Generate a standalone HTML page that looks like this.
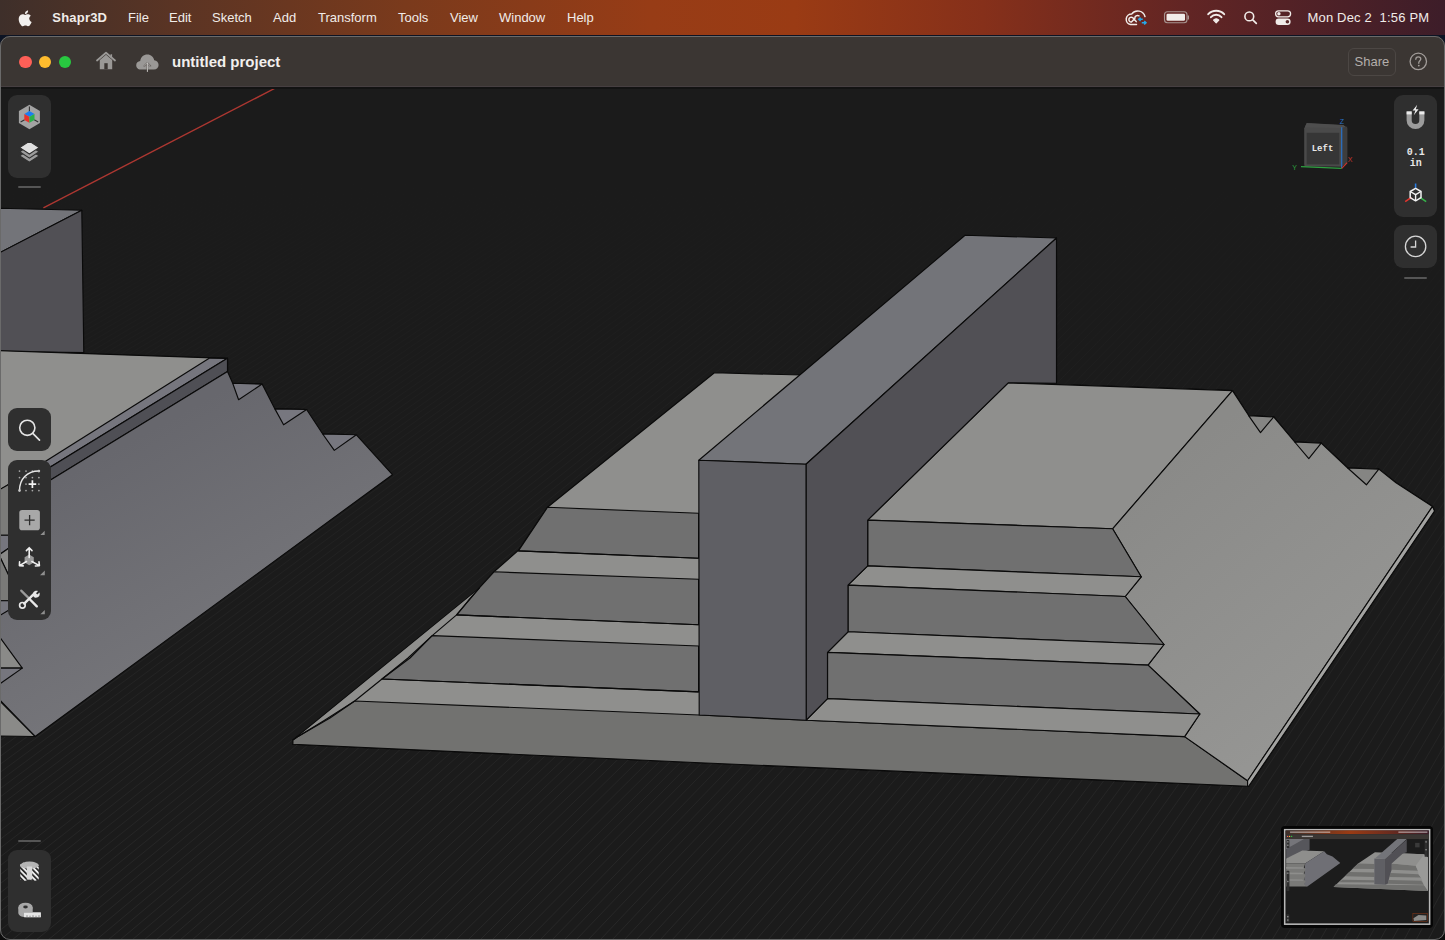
<!DOCTYPE html>
<html><head><meta charset="utf-8">
<style>
html,body{margin:0;padding:0;}
body{width:1445px;height:940px;overflow:hidden;position:relative;background:linear-gradient(180deg,#0d1424 0,#0d1424 60px,#0c0c0c 61px,#0c0c0c 100%);font-family:"Liberation Sans",sans-serif;}
.abs{position:absolute;}
#menubar{left:0;top:0;width:1445px;height:35px;background:linear-gradient(90deg,#3e2f2a 0%,#5a3424 12%,#7a3a1c 28%,#973c16 45%,#9a3b14 55%,#86301a 68%,#622524 82%,#3d1d29 100%);}
.mi{position:absolute;top:10.5px;font-size:13px;line-height:13px;color:#f1ece9;white-space:nowrap;}
#win{left:0;top:36px;width:1445px;height:904px;border-radius:10px;overflow:hidden;background:#1b1b1b;}
#titlebar{left:0;top:0;width:1445px;height:50px;background:#3b3633;border-bottom:1px solid #463f41;}
#winborder{left:0;top:36px;width:1443px;height:902px;border-radius:10px;border:1px solid #6a6a6a;pointer-events:none;}
.panel{position:absolute;background:#2f2f2f;border-radius:9px;}
.divider{position:absolute;height:2px;background:#555;border-radius:1px;}
</style></head><body>
<div id="menubar" class="abs">
  <svg class="abs" style="left:18px;top:9px" width="16" height="18" viewBox="0 0 16 18"><path d="M11.2 9.6c0-1.9 1.6-2.8 1.6-2.9-0.9-1.3-2.3-1.5-2.8-1.5-1.2-0.1-2.3 0.7-2.9 0.7-0.6 0-1.5-0.7-2.5-0.7C3.300 5.2 2.1 6 1.400 7.200 0 9.600 1 13.200 2.400 15.200c0.7 1 1.5 2.100 2.500 2.100 1 0 1.400-0.700 2.600-0.700 1.200 0 1.500 0.700 2.600 0.600 1.100 0 1.800-1 2.400-2 0.800-1.100 1.100-2.200 1.100-2.200-0.100 0-2.300-0.900-2.400-3.400zM9.300 3.900c0.500-0.700 0.900-1.600 0.800-2.500-0.800 0-1.700 0.500-2.300 1.200-0.500 0.600-0.900 1.500-0.800 2.400 0.900 0.100 1.700-0.400 2.300-1.100z" fill="#f2f0ee"/></svg>
  <div class="mi" style="left:52.3px;font-weight:bold;letter-spacing:0.2px">Shapr3D</div>
  <div class="mi" style="left:128px">File</div>
  <div class="mi" style="left:169px">Edit</div>
  <div class="mi" style="left:212px">Sketch</div>
  <div class="mi" style="left:273px">Add</div>
  <div class="mi" style="left:318px">Transform</div>
  <div class="mi" style="left:398px">Tools</div>
  <div class="mi" style="left:450px">View</div>
  <div class="mi" style="left:499px">Window</div>
  <div class="mi" style="left:567px">Help</div>
  
  <svg class="abs" style="left:1122px;top:6px" width="170" height="24" viewBox="1122 6 170 24">
    <g fill="none" stroke="#f1ece9" stroke-width="1.5" stroke-linecap="round">
      <path d="M1136.5 24.6 H1130.6 A5.4 5.4 0 0 1 1131.8 13.9 A7.5 7.5 0 0 1 1145 16.6"/>
      <path d="M1136.2 21.6 L1132.6 17.6 A2.4 2.4 0 1 0 1131.4 22 L1134.8 18.4 A2.8 2.8 0 0 1 1139 15.8"/>
    </g>
    <path d="M1142.8 19.3 H1138.8 M1140.6 17.6 L1138.8 19.3 L1140.6 21" fill="none" stroke="#25a8e8" stroke-width="1.5"/>
    <path d="M1141.8 22.8 H1146 M1144.2 21.1 L1146 22.8 L1144.2 24.5" fill="none" stroke="#25a8e8" stroke-width="1.5"/>
    <rect x="1164.5" y="11.8" width="22.5" height="11" rx="3" fill="none" stroke="#a89490" stroke-width="1.1"/>
    <rect x="1166.5" y="13.8" width="18.5" height="7" rx="1.3" fill="#f1ece9"/>
    <path d="M1188.3 15.5 V19.5" stroke="#a89490" stroke-width="1.4"/>
    <path d="M1208.2 14.2 A11 11 0 0 1 1224.2 14.2" fill="none" stroke="#f1ece9" stroke-width="1.9" stroke-linecap="round"/>
    <path d="M1210.9 17.2 A7 7 0 0 1 1221.5 17.2" fill="none" stroke="#f1ece9" stroke-width="1.9" stroke-linecap="round"/>
    <path d="M1213.6 20.1 A3.2 3.2 0 0 1 1218.8 20.1 L1216.2 22.8 Z" fill="#f1ece9" stroke="#f1ece9" stroke-width="1.2" stroke-linejoin="round"/>
    <circle cx="1249.3" cy="16.4" r="4.4" fill="none" stroke="#f1ece9" stroke-width="1.6"/>
    <path d="M1252.5 19.6 L1256.3 23.4" stroke="#f1ece9" stroke-width="1.7" stroke-linecap="round"/>
    <rect x="1275.6" y="10.8" width="15" height="6" rx="3" fill="none" stroke="#f1ece9" stroke-width="1.3"/>
    <circle cx="1278.9" cy="13.8" r="1.7" fill="#f1ece9"/>
    <rect x="1275.6" y="18.6" width="15" height="6.4" rx="3.2" fill="#f1ece9"/>
    <circle cx="1287.4" cy="21.8" r="1.8" fill="#5a2a2a"/>
  </svg>
  <div class="mi" style="left:1307.5px;letter-spacing:0.18px">Mon Dec 2&nbsp;&nbsp;1:56 PM</div>
</div>
<div id="win" class="abs">
  <div id="titlebar" class="abs">
  <div class="abs" style="left:19.4px;top:19.7px;width:12.4px;height:12.4px;border-radius:50%;background:#fe5f57"></div>
  <div class="abs" style="left:38.9px;top:19.7px;width:12.4px;height:12.4px;border-radius:50%;background:#febc2e"></div>
  <div class="abs" style="left:58.7px;top:19.7px;width:12.4px;height:12.4px;border-radius:50%;background:#28c840"></div>
  <svg class="abs" style="left:95px;top:15px" width="22" height="20" viewBox="0 0 22 20">
    <path d="M2 9.5 L11 1.8 L20 9.5" fill="none" stroke="#9a9896" stroke-width="1.8" stroke-linecap="round" stroke-linejoin="round"/>
    <path d="M16.3 3.2 V6.8" stroke="#9a9896" stroke-width="1.6"/>
    <path d="M4.8 9 L11 3.8 L17.2 9 V18.2 H4.8 Z" fill="#9a9896"/>
    <rect x="9.3" y="12.2" width="3.4" height="6" fill="#3b3633"/>
  </svg>
  <svg class="abs" style="left:135px;top:16px" width="25" height="20" viewBox="0 0 25 20">
    <path d="M6 17.5 C2.5 17.5 1.2 15 1.2 13.2 C1.2 10.8 3 9.2 5.2 9 C5.6 5.2 8.6 2.5 12.4 2.5 C16 2.5 18.6 5 19.2 8.2 C21.8 8.4 23.6 10.4 23.6 13 C23.6 15.6 21.6 17.5 19 17.5 Z" fill="#9a9896"/>
    <path d="M12.4 19.5 V11.2 M9.4 14 L12.4 11 L15.4 14" fill="none" stroke="#3b3633" stroke-width="1.5" stroke-linecap="round" stroke-linejoin="round"/>
    <path d="M12.4 19.5 V11.2 M9.4 14 L12.4 11 L15.4 14" fill="none" stroke="#d8d6d4" stroke-width="0.9" stroke-linecap="round" stroke-linejoin="round"/>
  </svg>
  <div class="abs" style="left:172px;top:17.5px;font-size:15px;line-height:15px;font-weight:bold;color:#f2efed;white-space:nowrap">untitled project</div>
  <div class="abs" style="left:1348px;top:12.3px;width:46px;height:26px;border:1px solid #4c4744;border-radius:6px;box-sizing:content-box"></div>
  <div class="abs" style="left:1354.5px;top:18.5px;font-size:13px;line-height:13px;color:#b3aeab;white-space:nowrap">Share</div>
  <svg class="abs" style="left:1408px;top:15px" width="21" height="21" viewBox="0 0 21 21">
    <circle cx="10.3" cy="10.4" r="8.2" fill="none" stroke="#a19c99" stroke-width="1.3"/>
    <path d="M7.8 8.3 C7.8 6.8 8.9 5.9 10.3 5.9 C11.8 5.9 12.8 6.8 12.8 8.1 C12.8 9.6 10.8 9.9 10.8 11.6 V12.3" fill="none" stroke="#a19c99" stroke-width="1.3" stroke-linecap="round"/>
    <circle cx="10.8" cy="14.6" r="0.9" fill="#a19c99"/>
  </svg>
</div>
  <svg class="abs" style="left:0;top:51px" width="1445" height="853" viewBox="0 87 1445 853">
    <defs><linearGradient id="gridfade" gradientUnits="userSpaceOnUse" x1="0" y1="180" x2="0" y2="940"><stop offset="0" stop-color="#1b1b1b"/><stop offset="0.45" stop-color="#212121"/><stop offset="1" stop-color="#272727"/></linearGradient>
    <linearGradient id="sideR" gradientUnits="userSpaceOnUse" x1="1150" y1="480" x2="1330" y2="700"><stop offset="0" stop-color="#8a8a88"/><stop offset="1" stop-color="#959593"/></linearGradient>
    <linearGradient id="sideL" gradientUnits="userSpaceOnUse" x1="150" y1="430" x2="300" y2="700"><stop offset="0" stop-color="#67676d"/><stop offset="1" stop-color="#7a7a7e"/></linearGradient></defs>
    <rect x="0" y="87" width="1445" height="853" fill="#1b1b1b"/>
    <g stroke="url(#gridfade)" stroke-width="1"><line x1="-1155.8" y1="140" x2="-3600.0" y2="940"/><line x1="-1148.6" y1="140" x2="-3588.0" y2="940"/><line x1="-1141.4" y1="140" x2="-3576.0" y2="940"/><line x1="-1134.3" y1="140" x2="-3564.0" y2="940"/><line x1="-1127.1" y1="140" x2="-3552.0" y2="940"/><line x1="-1119.9" y1="140" x2="-3540.0" y2="940"/><line x1="-1112.7" y1="140" x2="-3528.0" y2="940"/><line x1="-1105.5" y1="140" x2="-3516.0" y2="940"/><line x1="-1098.4" y1="140" x2="-3504.0" y2="940"/><line x1="-1091.2" y1="140" x2="-3492.0" y2="940"/><line x1="-1084.0" y1="140" x2="-3480.0" y2="940"/><line x1="-1076.8" y1="140" x2="-3468.0" y2="940"/><line x1="-1069.7" y1="140" x2="-3456.0" y2="940"/><line x1="-1062.5" y1="140" x2="-3444.0" y2="940"/><line x1="-1055.3" y1="140" x2="-3432.0" y2="940"/><line x1="-1048.1" y1="140" x2="-3420.0" y2="940"/><line x1="-1041.0" y1="140" x2="-3408.0" y2="940"/><line x1="-1033.8" y1="140" x2="-3396.0" y2="940"/><line x1="-1026.6" y1="140" x2="-3384.0" y2="940"/><line x1="-1019.4" y1="140" x2="-3372.0" y2="940"/><line x1="-1012.3" y1="140" x2="-3360.0" y2="940"/><line x1="-1005.1" y1="140" x2="-3348.0" y2="940"/><line x1="-997.9" y1="140" x2="-3336.0" y2="940"/><line x1="-990.7" y1="140" x2="-3324.0" y2="940"/><line x1="-983.6" y1="140" x2="-3312.0" y2="940"/><line x1="-976.4" y1="140" x2="-3300.0" y2="940"/><line x1="-969.2" y1="140" x2="-3288.0" y2="940"/><line x1="-962.0" y1="140" x2="-3276.0" y2="940"/><line x1="-954.9" y1="140" x2="-3264.0" y2="940"/><line x1="-947.7" y1="140" x2="-3252.0" y2="940"/><line x1="-940.5" y1="140" x2="-3240.0" y2="940"/><line x1="-933.3" y1="140" x2="-3228.0" y2="940"/><line x1="-926.2" y1="140" x2="-3216.0" y2="940"/><line x1="-919.0" y1="140" x2="-3204.0" y2="940"/><line x1="-911.8" y1="140" x2="-3192.0" y2="940"/><line x1="-904.6" y1="140" x2="-3180.0" y2="940"/><line x1="-897.4" y1="140" x2="-3168.0" y2="940"/><line x1="-890.3" y1="140" x2="-3156.0" y2="940"/><line x1="-883.1" y1="140" x2="-3144.0" y2="940"/><line x1="-875.9" y1="140" x2="-3132.0" y2="940"/><line x1="-868.7" y1="140" x2="-3120.0" y2="940"/><line x1="-861.6" y1="140" x2="-3108.0" y2="940"/><line x1="-854.4" y1="140" x2="-3096.0" y2="940"/><line x1="-847.2" y1="140" x2="-3084.0" y2="940"/><line x1="-840.0" y1="140" x2="-3072.0" y2="940"/><line x1="-832.9" y1="140" x2="-3060.0" y2="940"/><line x1="-825.7" y1="140" x2="-3048.0" y2="940"/><line x1="-818.5" y1="140" x2="-3036.0" y2="940"/><line x1="-811.3" y1="140" x2="-3024.0" y2="940"/><line x1="-804.2" y1="140" x2="-3012.0" y2="940"/><line x1="-797.0" y1="140" x2="-3000.0" y2="940"/><line x1="-789.8" y1="140" x2="-2988.0" y2="940"/><line x1="-782.6" y1="140" x2="-2976.0" y2="940"/><line x1="-775.5" y1="140" x2="-2964.0" y2="940"/><line x1="-768.3" y1="140" x2="-2952.0" y2="940"/><line x1="-761.1" y1="140" x2="-2940.0" y2="940"/><line x1="-753.9" y1="140" x2="-2928.0" y2="940"/><line x1="-746.8" y1="140" x2="-2916.0" y2="940"/><line x1="-739.6" y1="140" x2="-2904.0" y2="940"/><line x1="-732.4" y1="140" x2="-2892.0" y2="940"/><line x1="-725.2" y1="140" x2="-2880.0" y2="940"/><line x1="-718.1" y1="140" x2="-2868.0" y2="940"/><line x1="-710.9" y1="140" x2="-2856.0" y2="940"/><line x1="-703.7" y1="140" x2="-2844.0" y2="940"/><line x1="-696.5" y1="140" x2="-2832.0" y2="940"/><line x1="-689.3" y1="140" x2="-2820.0" y2="940"/><line x1="-682.2" y1="140" x2="-2808.0" y2="940"/><line x1="-675.0" y1="140" x2="-2796.0" y2="940"/><line x1="-667.8" y1="140" x2="-2784.0" y2="940"/><line x1="-660.6" y1="140" x2="-2772.0" y2="940"/><line x1="-653.5" y1="140" x2="-2760.0" y2="940"/><line x1="-646.3" y1="140" x2="-2748.0" y2="940"/><line x1="-639.1" y1="140" x2="-2736.0" y2="940"/><line x1="-631.9" y1="140" x2="-2724.0" y2="940"/><line x1="-624.8" y1="140" x2="-2712.0" y2="940"/><line x1="-617.6" y1="140" x2="-2700.0" y2="940"/><line x1="-610.4" y1="140" x2="-2688.0" y2="940"/><line x1="-603.2" y1="140" x2="-2676.0" y2="940"/><line x1="-596.1" y1="140" x2="-2664.0" y2="940"/><line x1="-588.9" y1="140" x2="-2652.0" y2="940"/><line x1="-581.7" y1="140" x2="-2640.0" y2="940"/><line x1="-574.5" y1="140" x2="-2628.0" y2="940"/><line x1="-567.4" y1="140" x2="-2616.0" y2="940"/><line x1="-560.2" y1="140" x2="-2604.0" y2="940"/><line x1="-553.0" y1="140" x2="-2592.0" y2="940"/><line x1="-545.8" y1="140" x2="-2580.0" y2="940"/><line x1="-538.7" y1="140" x2="-2568.0" y2="940"/><line x1="-531.5" y1="140" x2="-2556.0" y2="940"/><line x1="-524.3" y1="140" x2="-2544.0" y2="940"/><line x1="-517.1" y1="140" x2="-2532.0" y2="940"/><line x1="-509.9" y1="140" x2="-2520.0" y2="940"/><line x1="-502.8" y1="140" x2="-2508.0" y2="940"/><line x1="-495.6" y1="140" x2="-2496.0" y2="940"/><line x1="-488.4" y1="140" x2="-2484.0" y2="940"/><line x1="-481.2" y1="140" x2="-2472.0" y2="940"/><line x1="-474.1" y1="140" x2="-2460.0" y2="940"/><line x1="-466.9" y1="140" x2="-2448.0" y2="940"/><line x1="-459.7" y1="140" x2="-2436.0" y2="940"/><line x1="-452.5" y1="140" x2="-2424.0" y2="940"/><line x1="-445.4" y1="140" x2="-2412.0" y2="940"/><line x1="-438.2" y1="140" x2="-2400.0" y2="940"/><line x1="-431.0" y1="140" x2="-2388.0" y2="940"/><line x1="-423.8" y1="140" x2="-2376.0" y2="940"/><line x1="-416.7" y1="140" x2="-2364.0" y2="940"/><line x1="-409.5" y1="140" x2="-2352.0" y2="940"/><line x1="-402.3" y1="140" x2="-2340.0" y2="940"/><line x1="-395.1" y1="140" x2="-2328.0" y2="940"/><line x1="-388.0" y1="140" x2="-2316.0" y2="940"/><line x1="-380.8" y1="140" x2="-2304.0" y2="940"/><line x1="-373.6" y1="140" x2="-2292.0" y2="940"/><line x1="-366.4" y1="140" x2="-2280.0" y2="940"/><line x1="-359.3" y1="140" x2="-2268.0" y2="940"/><line x1="-352.1" y1="140" x2="-2256.0" y2="940"/><line x1="-344.9" y1="140" x2="-2244.0" y2="940"/><line x1="-337.7" y1="140" x2="-2232.0" y2="940"/><line x1="-330.6" y1="140" x2="-2220.0" y2="940"/><line x1="-323.4" y1="140" x2="-2208.0" y2="940"/><line x1="-316.2" y1="140" x2="-2196.0" y2="940"/><line x1="-309.0" y1="140" x2="-2184.0" y2="940"/><line x1="-301.8" y1="140" x2="-2172.0" y2="940"/><line x1="-294.7" y1="140" x2="-2160.0" y2="940"/><line x1="-287.5" y1="140" x2="-2148.0" y2="940"/><line x1="-280.3" y1="140" x2="-2136.0" y2="940"/><line x1="-273.1" y1="140" x2="-2124.0" y2="940"/><line x1="-266.0" y1="140" x2="-2112.0" y2="940"/><line x1="-258.8" y1="140" x2="-2100.0" y2="940"/><line x1="-251.6" y1="140" x2="-2088.0" y2="940"/><line x1="-244.4" y1="140" x2="-2076.0" y2="940"/><line x1="-237.3" y1="140" x2="-2064.0" y2="940"/><line x1="-230.1" y1="140" x2="-2052.0" y2="940"/><line x1="-222.9" y1="140" x2="-2040.0" y2="940"/><line x1="-215.7" y1="140" x2="-2028.0" y2="940"/><line x1="-208.6" y1="140" x2="-2016.0" y2="940"/><line x1="-201.4" y1="140" x2="-2004.0" y2="940"/><line x1="-194.2" y1="140" x2="-1992.0" y2="940"/><line x1="-187.0" y1="140" x2="-1980.0" y2="940"/><line x1="-179.9" y1="140" x2="-1968.0" y2="940"/><line x1="-172.7" y1="140" x2="-1956.0" y2="940"/><line x1="-165.5" y1="140" x2="-1944.0" y2="940"/><line x1="-158.3" y1="140" x2="-1932.0" y2="940"/><line x1="-151.2" y1="140" x2="-1920.0" y2="940"/><line x1="-144.0" y1="140" x2="-1908.0" y2="940"/><line x1="-136.8" y1="140" x2="-1896.0" y2="940"/><line x1="-129.6" y1="140" x2="-1884.0" y2="940"/><line x1="-122.5" y1="140" x2="-1872.0" y2="940"/><line x1="-115.3" y1="140" x2="-1860.0" y2="940"/><line x1="-108.1" y1="140" x2="-1848.0" y2="940"/><line x1="-100.9" y1="140" x2="-1836.0" y2="940"/><line x1="-93.7" y1="140" x2="-1824.0" y2="940"/><line x1="-86.6" y1="140" x2="-1812.0" y2="940"/><line x1="-79.4" y1="140" x2="-1800.0" y2="940"/><line x1="-72.2" y1="140" x2="-1788.0" y2="940"/><line x1="-65.0" y1="140" x2="-1776.0" y2="940"/><line x1="-57.9" y1="140" x2="-1764.0" y2="940"/><line x1="-50.7" y1="140" x2="-1752.0" y2="940"/><line x1="-43.5" y1="140" x2="-1740.0" y2="940"/><line x1="-36.3" y1="140" x2="-1728.0" y2="940"/><line x1="-29.2" y1="140" x2="-1716.0" y2="940"/><line x1="-22.0" y1="140" x2="-1704.0" y2="940"/><line x1="-14.8" y1="140" x2="-1692.0" y2="940"/><line x1="-7.6" y1="140" x2="-1680.0" y2="940"/><line x1="-0.5" y1="140" x2="-1668.0" y2="940"/><line x1="6.7" y1="140" x2="-1656.0" y2="940"/><line x1="13.9" y1="140" x2="-1644.0" y2="940"/><line x1="21.1" y1="140" x2="-1632.0" y2="940"/><line x1="28.2" y1="140" x2="-1620.0" y2="940"/><line x1="35.4" y1="140" x2="-1608.0" y2="940"/><line x1="42.6" y1="140" x2="-1596.0" y2="940"/><line x1="49.8" y1="140" x2="-1584.0" y2="940"/><line x1="56.9" y1="140" x2="-1572.0" y2="940"/><line x1="64.1" y1="140" x2="-1560.0" y2="940"/><line x1="71.3" y1="140" x2="-1548.0" y2="940"/><line x1="78.5" y1="140" x2="-1536.0" y2="940"/><line x1="85.6" y1="140" x2="-1524.0" y2="940"/><line x1="92.8" y1="140" x2="-1512.0" y2="940"/><line x1="100.0" y1="140" x2="-1500.0" y2="940"/><line x1="107.2" y1="140" x2="-1488.0" y2="940"/><line x1="114.4" y1="140" x2="-1476.0" y2="940"/><line x1="121.5" y1="140" x2="-1464.0" y2="940"/><line x1="128.7" y1="140" x2="-1452.0" y2="940"/><line x1="135.9" y1="140" x2="-1440.0" y2="940"/><line x1="143.1" y1="140" x2="-1428.0" y2="940"/><line x1="150.2" y1="140" x2="-1416.0" y2="940"/><line x1="157.4" y1="140" x2="-1404.0" y2="940"/><line x1="164.6" y1="140" x2="-1392.0" y2="940"/><line x1="171.8" y1="140" x2="-1380.0" y2="940"/><line x1="178.9" y1="140" x2="-1368.0" y2="940"/><line x1="186.1" y1="140" x2="-1356.0" y2="940"/><line x1="193.3" y1="140" x2="-1344.0" y2="940"/><line x1="200.5" y1="140" x2="-1332.0" y2="940"/><line x1="207.6" y1="140" x2="-1320.0" y2="940"/><line x1="214.8" y1="140" x2="-1308.0" y2="940"/><line x1="222.0" y1="140" x2="-1296.0" y2="940"/><line x1="229.2" y1="140" x2="-1284.0" y2="940"/><line x1="236.3" y1="140" x2="-1272.0" y2="940"/><line x1="243.5" y1="140" x2="-1260.0" y2="940"/><line x1="250.7" y1="140" x2="-1248.0" y2="940"/><line x1="257.9" y1="140" x2="-1236.0" y2="940"/><line x1="265.0" y1="140" x2="-1224.0" y2="940"/><line x1="272.2" y1="140" x2="-1212.0" y2="940"/><line x1="279.4" y1="140" x2="-1200.0" y2="940"/><line x1="286.6" y1="140" x2="-1188.0" y2="940"/><line x1="293.7" y1="140" x2="-1176.0" y2="940"/><line x1="300.9" y1="140" x2="-1164.0" y2="940"/><line x1="308.1" y1="140" x2="-1152.0" y2="940"/><line x1="315.3" y1="140" x2="-1140.0" y2="940"/><line x1="322.5" y1="140" x2="-1128.0" y2="940"/><line x1="329.6" y1="140" x2="-1116.0" y2="940"/><line x1="336.8" y1="140" x2="-1104.0" y2="940"/><line x1="344.0" y1="140" x2="-1092.0" y2="940"/><line x1="351.2" y1="140" x2="-1080.0" y2="940"/><line x1="358.3" y1="140" x2="-1068.0" y2="940"/><line x1="365.5" y1="140" x2="-1056.0" y2="940"/><line x1="372.7" y1="140" x2="-1044.0" y2="940"/><line x1="379.9" y1="140" x2="-1032.0" y2="940"/><line x1="387.0" y1="140" x2="-1020.0" y2="940"/><line x1="394.2" y1="140" x2="-1008.0" y2="940"/><line x1="401.4" y1="140" x2="-996.0" y2="940"/><line x1="408.6" y1="140" x2="-984.0" y2="940"/><line x1="415.7" y1="140" x2="-972.0" y2="940"/><line x1="422.9" y1="140" x2="-960.0" y2="940"/><line x1="430.1" y1="140" x2="-948.0" y2="940"/><line x1="437.3" y1="140" x2="-936.0" y2="940"/><line x1="444.4" y1="140" x2="-924.0" y2="940"/><line x1="451.6" y1="140" x2="-912.0" y2="940"/><line x1="458.8" y1="140" x2="-900.0" y2="940"/><line x1="466.0" y1="140" x2="-888.0" y2="940"/><line x1="473.1" y1="140" x2="-876.0" y2="940"/><line x1="480.3" y1="140" x2="-864.0" y2="940"/><line x1="487.5" y1="140" x2="-852.0" y2="940"/><line x1="494.7" y1="140" x2="-840.0" y2="940"/><line x1="501.8" y1="140" x2="-828.0" y2="940"/><line x1="509.0" y1="140" x2="-816.0" y2="940"/><line x1="516.2" y1="140" x2="-804.0" y2="940"/><line x1="523.4" y1="140" x2="-792.0" y2="940"/><line x1="530.6" y1="140" x2="-780.0" y2="940"/><line x1="537.7" y1="140" x2="-768.0" y2="940"/><line x1="544.9" y1="140" x2="-756.0" y2="940"/><line x1="552.1" y1="140" x2="-744.0" y2="940"/><line x1="559.3" y1="140" x2="-732.0" y2="940"/><line x1="566.4" y1="140" x2="-720.0" y2="940"/><line x1="573.6" y1="140" x2="-708.0" y2="940"/><line x1="580.8" y1="140" x2="-696.0" y2="940"/><line x1="588.0" y1="140" x2="-684.0" y2="940"/><line x1="595.1" y1="140" x2="-672.0" y2="940"/><line x1="602.3" y1="140" x2="-660.0" y2="940"/><line x1="609.5" y1="140" x2="-648.0" y2="940"/><line x1="616.7" y1="140" x2="-636.0" y2="940"/><line x1="623.8" y1="140" x2="-624.0" y2="940"/><line x1="631.0" y1="140" x2="-612.0" y2="940"/><line x1="638.2" y1="140" x2="-600.0" y2="940"/><line x1="645.4" y1="140" x2="-588.0" y2="940"/><line x1="652.5" y1="140" x2="-576.0" y2="940"/><line x1="659.7" y1="140" x2="-564.0" y2="940"/><line x1="666.9" y1="140" x2="-552.0" y2="940"/><line x1="674.1" y1="140" x2="-540.0" y2="940"/><line x1="681.2" y1="140" x2="-528.0" y2="940"/><line x1="688.4" y1="140" x2="-516.0" y2="940"/><line x1="695.6" y1="140" x2="-504.0" y2="940"/><line x1="702.8" y1="140" x2="-492.0" y2="940"/><line x1="709.9" y1="140" x2="-480.0" y2="940"/><line x1="717.1" y1="140" x2="-468.0" y2="940"/><line x1="724.3" y1="140" x2="-456.0" y2="940"/><line x1="731.5" y1="140" x2="-444.0" y2="940"/><line x1="738.7" y1="140" x2="-432.0" y2="940"/><line x1="745.8" y1="140" x2="-420.0" y2="940"/><line x1="753.0" y1="140" x2="-408.0" y2="940"/><line x1="760.2" y1="140" x2="-396.0" y2="940"/><line x1="767.4" y1="140" x2="-384.0" y2="940"/><line x1="774.5" y1="140" x2="-372.0" y2="940"/><line x1="781.7" y1="140" x2="-360.0" y2="940"/><line x1="788.9" y1="140" x2="-348.0" y2="940"/><line x1="796.1" y1="140" x2="-336.0" y2="940"/><line x1="803.2" y1="140" x2="-324.0" y2="940"/><line x1="810.4" y1="140" x2="-312.0" y2="940"/><line x1="817.6" y1="140" x2="-300.0" y2="940"/><line x1="824.8" y1="140" x2="-288.0" y2="940"/><line x1="831.9" y1="140" x2="-276.0" y2="940"/><line x1="839.1" y1="140" x2="-264.0" y2="940"/><line x1="846.3" y1="140" x2="-252.0" y2="940"/><line x1="853.5" y1="140" x2="-240.0" y2="940"/><line x1="860.6" y1="140" x2="-228.0" y2="940"/><line x1="867.8" y1="140" x2="-216.0" y2="940"/><line x1="875.0" y1="140" x2="-204.0" y2="940"/><line x1="882.2" y1="140" x2="-192.0" y2="940"/><line x1="889.3" y1="140" x2="-180.0" y2="940"/><line x1="896.5" y1="140" x2="-168.0" y2="940"/><line x1="903.7" y1="140" x2="-156.0" y2="940"/><line x1="910.9" y1="140" x2="-144.0" y2="940"/><line x1="918.1" y1="140" x2="-132.0" y2="940"/><line x1="925.2" y1="140" x2="-120.0" y2="940"/><line x1="932.4" y1="140" x2="-108.0" y2="940"/><line x1="939.6" y1="140" x2="-96.0" y2="940"/><line x1="946.8" y1="140" x2="-84.0" y2="940"/><line x1="953.9" y1="140" x2="-72.0" y2="940"/><line x1="961.1" y1="140" x2="-60.0" y2="940"/><line x1="968.3" y1="140" x2="-48.0" y2="940"/><line x1="975.5" y1="140" x2="-36.0" y2="940"/><line x1="982.6" y1="140" x2="-24.0" y2="940"/><line x1="989.8" y1="140" x2="-12.0" y2="940"/><line x1="997.0" y1="140" x2="0.0" y2="940"/><line x1="1004.2" y1="140" x2="12.0" y2="940"/><line x1="1011.3" y1="140" x2="24.0" y2="940"/><line x1="1018.5" y1="140" x2="36.0" y2="940"/><line x1="1025.7" y1="140" x2="48.0" y2="940"/><line x1="1032.9" y1="140" x2="60.0" y2="940"/><line x1="1040.0" y1="140" x2="72.0" y2="940"/><line x1="1047.2" y1="140" x2="84.0" y2="940"/><line x1="1054.4" y1="140" x2="96.0" y2="940"/><line x1="1061.6" y1="140" x2="108.0" y2="940"/><line x1="1068.7" y1="140" x2="120.0" y2="940"/><line x1="1075.9" y1="140" x2="132.0" y2="940"/><line x1="1083.1" y1="140" x2="144.0" y2="940"/><line x1="1090.3" y1="140" x2="156.0" y2="940"/><line x1="1097.4" y1="140" x2="168.0" y2="940"/><line x1="1104.6" y1="140" x2="180.0" y2="940"/><line x1="1111.8" y1="140" x2="192.0" y2="940"/><line x1="1119.0" y1="140" x2="204.0" y2="940"/><line x1="1126.2" y1="140" x2="216.0" y2="940"/><line x1="1133.3" y1="140" x2="228.0" y2="940"/><line x1="1140.5" y1="140" x2="240.0" y2="940"/><line x1="1147.7" y1="140" x2="252.0" y2="940"/><line x1="1154.9" y1="140" x2="264.0" y2="940"/><line x1="1162.0" y1="140" x2="276.0" y2="940"/><line x1="1169.2" y1="140" x2="288.0" y2="940"/><line x1="1176.4" y1="140" x2="300.0" y2="940"/><line x1="1183.6" y1="140" x2="312.0" y2="940"/><line x1="1190.7" y1="140" x2="324.0" y2="940"/><line x1="1197.9" y1="140" x2="336.0" y2="940"/><line x1="1205.1" y1="140" x2="348.0" y2="940"/><line x1="1212.3" y1="140" x2="360.0" y2="940"/><line x1="1219.4" y1="140" x2="372.0" y2="940"/><line x1="1226.6" y1="140" x2="384.0" y2="940"/><line x1="1233.8" y1="140" x2="396.0" y2="940"/><line x1="1241.0" y1="140" x2="408.0" y2="940"/><line x1="1248.1" y1="140" x2="420.0" y2="940"/><line x1="1255.3" y1="140" x2="432.0" y2="940"/><line x1="1262.5" y1="140" x2="444.0" y2="940"/><line x1="1269.7" y1="140" x2="456.0" y2="940"/><line x1="1276.8" y1="140" x2="468.0" y2="940"/><line x1="1284.0" y1="140" x2="480.0" y2="940"/><line x1="1291.2" y1="140" x2="492.0" y2="940"/><line x1="1298.4" y1="140" x2="504.0" y2="940"/><line x1="1305.5" y1="140" x2="516.0" y2="940"/><line x1="1312.7" y1="140" x2="528.0" y2="940"/><line x1="1319.9" y1="140" x2="540.0" y2="940"/><line x1="1327.1" y1="140" x2="552.0" y2="940"/><line x1="1334.3" y1="140" x2="564.0" y2="940"/><line x1="1341.4" y1="140" x2="576.0" y2="940"/><line x1="1348.6" y1="140" x2="588.0" y2="940"/><line x1="1355.8" y1="140" x2="600.0" y2="940"/><line x1="1363.0" y1="140" x2="612.0" y2="940"/><line x1="1370.1" y1="140" x2="624.0" y2="940"/><line x1="1377.3" y1="140" x2="636.0" y2="940"/><line x1="1384.5" y1="140" x2="648.0" y2="940"/><line x1="1391.7" y1="140" x2="660.0" y2="940"/><line x1="1398.8" y1="140" x2="672.0" y2="940"/><line x1="1406.0" y1="140" x2="684.0" y2="940"/><line x1="1413.2" y1="140" x2="696.0" y2="940"/><line x1="1420.4" y1="140" x2="708.0" y2="940"/><line x1="1427.5" y1="140" x2="720.0" y2="940"/><line x1="1434.7" y1="140" x2="732.0" y2="940"/><line x1="1441.9" y1="140" x2="744.0" y2="940"/><line x1="1449.1" y1="140" x2="756.0" y2="940"/><line x1="1456.2" y1="140" x2="768.0" y2="940"/><line x1="1463.4" y1="140" x2="780.0" y2="940"/><line x1="1470.6" y1="140" x2="792.0" y2="940"/><line x1="1477.8" y1="140" x2="804.0" y2="940"/><line x1="1484.9" y1="140" x2="816.0" y2="940"/><line x1="1492.1" y1="140" x2="828.0" y2="940"/><line x1="1499.3" y1="140" x2="840.0" y2="940"/><line x1="1506.5" y1="140" x2="852.0" y2="940"/><line x1="1513.6" y1="140" x2="864.0" y2="940"/><line x1="1520.8" y1="140" x2="876.0" y2="940"/><line x1="1528.0" y1="140" x2="888.0" y2="940"/><line x1="1535.2" y1="140" x2="900.0" y2="940"/><line x1="1542.4" y1="140" x2="912.0" y2="940"/><line x1="1549.5" y1="140" x2="924.0" y2="940"/><line x1="1556.7" y1="140" x2="936.0" y2="940"/><line x1="1563.9" y1="140" x2="948.0" y2="940"/><line x1="1571.1" y1="140" x2="960.0" y2="940"/><line x1="1578.2" y1="140" x2="972.0" y2="940"/><line x1="1585.4" y1="140" x2="984.0" y2="940"/><line x1="1592.6" y1="140" x2="996.0" y2="940"/><line x1="1599.8" y1="140" x2="1008.0" y2="940"/><line x1="1606.9" y1="140" x2="1020.0" y2="940"/><line x1="1614.1" y1="140" x2="1032.0" y2="940"/><line x1="1621.3" y1="140" x2="1044.0" y2="940"/><line x1="1628.5" y1="140" x2="1056.0" y2="940"/><line x1="1635.6" y1="140" x2="1068.0" y2="940"/><line x1="1642.8" y1="140" x2="1080.0" y2="940"/><line x1="1650.0" y1="140" x2="1092.0" y2="940"/><line x1="1657.2" y1="140" x2="1104.0" y2="940"/><line x1="1664.3" y1="140" x2="1116.0" y2="940"/><line x1="1671.5" y1="140" x2="1128.0" y2="940"/><line x1="1678.7" y1="140" x2="1140.0" y2="940"/><line x1="1685.9" y1="140" x2="1152.0" y2="940"/><line x1="1693.0" y1="140" x2="1164.0" y2="940"/><line x1="1700.2" y1="140" x2="1176.0" y2="940"/><line x1="1707.4" y1="140" x2="1188.0" y2="940"/><line x1="1714.6" y1="140" x2="1200.0" y2="940"/><line x1="1721.7" y1="140" x2="1212.0" y2="940"/><line x1="1728.9" y1="140" x2="1224.0" y2="940"/><line x1="1736.1" y1="140" x2="1236.0" y2="940"/><line x1="1743.3" y1="140" x2="1248.0" y2="940"/><line x1="1750.5" y1="140" x2="1260.0" y2="940"/><line x1="1757.6" y1="140" x2="1272.0" y2="940"/><line x1="1764.8" y1="140" x2="1284.0" y2="940"/><line x1="1772.0" y1="140" x2="1296.0" y2="940"/><line x1="1779.2" y1="140" x2="1308.0" y2="940"/><line x1="1786.3" y1="140" x2="1320.0" y2="940"/><line x1="1793.5" y1="140" x2="1332.0" y2="940"/><line x1="1800.7" y1="140" x2="1344.0" y2="940"/><line x1="1807.9" y1="140" x2="1356.0" y2="940"/><line x1="1815.0" y1="140" x2="1368.0" y2="940"/><line x1="1822.2" y1="140" x2="1380.0" y2="940"/><line x1="1829.4" y1="140" x2="1392.0" y2="940"/><line x1="1836.6" y1="140" x2="1404.0" y2="940"/><line x1="1843.7" y1="140" x2="1416.0" y2="940"/><line x1="1850.9" y1="140" x2="1428.0" y2="940"/><line x1="1858.1" y1="140" x2="1440.0" y2="940"/><line x1="1865.3" y1="140" x2="1452.0" y2="940"/></g>
    <line x1="43.4" y1="207.8" x2="276.5" y2="87.5" stroke="#ad3731" stroke-width="1.4"/>
    <polygon points="0.0,208.2 81.8,210.2 0.0,252.6" fill="#737479" stroke="#0a0a0a" stroke-width="1.15" stroke-linejoin="round"/>
<polygon points="0.0,252.6 81.8,210.2 83.8,352.6 0.0,351.6" fill="#515055" stroke="#0a0a0a" stroke-width="1.15" stroke-linejoin="round"/>
<polygon points="-2.0,350.6 227.5,358.4 227.5,371.5 0.0,511.0 -2.0,511.0" fill="#8f8f8d" stroke="#0a0a0a" stroke-width="1.15" stroke-linejoin="round"/>
<polygon points="209.6,358.1 227.5,358.4 226.2,359.0 0.0,497.9 0.0,489.9" fill="#76767e" stroke="#0a0a0a" stroke-width="1.15" stroke-linejoin="round"/>
<polygon points="226.2,359.0 227.5,358.4 227.5,371.5 0.0,511.0 0.0,497.9" fill="#4f4f55" stroke="#0a0a0a" stroke-width="1.15" stroke-linejoin="round"/>
<polygon points="227.5,371.5 232.7,383.3 262.1,384.1 274.9,408.9 306.6,409.5 322.7,434.0 356.4,434.8 392.4,474.7 35.1,736.5 0.0,700.2 0.0,511.0" fill="url(#sideL)" stroke="#0a0a0a" stroke-width="1.15" stroke-linejoin="round"/>
<polygon points="232.7,383.3 262.1,384.1 238.6,399.7" fill="#77777f" stroke="#0a0a0a" stroke-width="1.15" stroke-linejoin="round"/>
<polygon points="274.9,408.9 306.6,409.5 283.6,424.8" fill="#77777f" stroke="#0a0a0a" stroke-width="1.15" stroke-linejoin="round"/>
<polygon points="322.7,434.0 356.4,434.8 334.3,450.4" fill="#77777f" stroke="#0a0a0a" stroke-width="1.15" stroke-linejoin="round"/>
<polygon points="-1.0,489.9 9.0,484.2 9.0,535.2 -1.0,535.2" fill="#7b7b79" stroke="#0a0a0a" stroke-width="1.15" stroke-linejoin="round"/>
<polygon points="-1.0,535.2 9.0,535.2 9.0,548.0 -1.0,555.0" fill="#76767e" stroke="#0a0a0a" stroke-width="1.15" stroke-linejoin="round"/>
<polygon points="-1.0,555.0 9.0,548.0 9.0,576.0" fill="#8a8a88" stroke="#0a0a0a" stroke-width="1.15" stroke-linejoin="round"/>
<polygon points="-1.0,555.0 9.0,576.0 9.0,600.7 -1.0,600.7" fill="#7a7a78" stroke="#0a0a0a" stroke-width="1.15" stroke-linejoin="round"/>
<polygon points="-1.0,600.7 9.0,600.7 9.0,610.0 -1.0,616.0" fill="#76767e" stroke="#0a0a0a" stroke-width="1.15" stroke-linejoin="round"/>
<polygon points="-1.0,636.2 22.3,668.1 -1.0,668.1" fill="#8a8a88" stroke="#0a0a0a" stroke-width="1.15" stroke-linejoin="round"/>
<polygon points="-1.0,668.1 22.3,668.1 -1.0,684.5" fill="#76767e" stroke="#0a0a0a" stroke-width="1.15" stroke-linejoin="round"/>
<polygon points="-1.0,700.2 35.1,736.5 -1.0,736.0" fill="#8a8a88" stroke="#0a0a0a" stroke-width="1.15" stroke-linejoin="round"/>
<polygon points="714.4,372.8 1000.0,380.0 1008.2,382.8 1232.5,390.6 1248.8,415.8 1273.7,416.9 1294.7,442.0 1321.2,443.1 1347.7,468.0 1378.8,469.1 1396.0,482.8 1432.5,506.4 1434.5,511.0 1248.5,786.5 1247.6,786.2 700.0,762.8 292.9,744.2 292.9,739.9 479.6,587.6 494.0,571.8 518.4,550.3 547.5,507.3" fill="#8f8f8d" stroke="#0a0a0a" stroke-width="1.15" stroke-linejoin="round"/>
<polygon points="547.5,507.3 698.6,513.3 698.6,558.2 518.4,550.9" fill="#707070" stroke="#0a0a0a" stroke-width="1.15" stroke-linejoin="round"/>
<polygon points="494.0,571.8 698.6,579.2 698.6,624.7 456.6,614.9 479.6,587.6" fill="#707070" stroke="#0a0a0a" stroke-width="1.15" stroke-linejoin="round"/>
<polygon points="432.2,635.6 698.6,646.0 698.6,691.9 382.0,679.0 410.0,658.0" fill="#707070" stroke="#0a0a0a" stroke-width="1.15" stroke-linejoin="round"/>
<polyline points="518.4,550.9 698.6,558.2" fill="none" stroke="#0a0a0a" stroke-width="1.15" stroke-linejoin="round"/>
<polyline points="456.6,614.9 698.6,624.7" fill="none" stroke="#0a0a0a" stroke-width="1.15" stroke-linejoin="round"/>
<polyline points="382.0,679.0 698.6,691.9" fill="none" stroke="#0a0a0a" stroke-width="1.15" stroke-linejoin="round"/>
<polygon points="354.7,701.0 699.2,715.0 806.2,720.2 1184.6,736.6 1247.6,780.7 1247.6,786.2 700.0,762.8 292.9,744.2 292.9,739.9 297.2,737.0 330.0,718.0" fill="#727270" stroke="#0a0a0a" stroke-width="1.15" stroke-linejoin="round"/>
<polyline points="479.6,587.6 468.0,601.0 456.6,614.9 432.2,635.6 408.0,658.0 382.0,679.0 354.7,701.0 325.0,720.0 297.2,737.0 292.9,739.9" fill="none" stroke="#0a0a0a" stroke-width="1.15" stroke-linejoin="round"/>
<polygon points="1008.2,382.8 1232.5,390.6 1112.6,528.8 867.7,520.1" fill="#8f8f8d" stroke="#0a0a0a" stroke-width="1.15" stroke-linejoin="round"/>
<polygon points="1232.5,390.6 1248.8,415.8 1273.7,416.9 1294.7,442.0 1321.2,443.1 1347.7,468.0 1378.8,469.1 1396.0,482.8 1432.5,506.4 1247.6,780.7 1184.6,736.6 1199.8,714.0 1148.0,665.1 1164.0,644.5 1125.2,596.5 1141.2,576.8 1112.6,528.8" fill="url(#sideR)" stroke="#0a0a0a" stroke-width="1.15" stroke-linejoin="round"/>
<polygon points="1248.8,415.8 1273.7,416.9 1260.5,432.6" fill="#858583" stroke="#0a0a0a" stroke-width="1.15" stroke-linejoin="round"/>
<polygon points="1294.7,442.0 1321.2,443.1 1308.8,458.6" fill="#858583" stroke="#0a0a0a" stroke-width="1.15" stroke-linejoin="round"/>
<polygon points="1347.7,468.0 1378.8,469.1 1366.4,484.8" fill="#858583" stroke="#0a0a0a" stroke-width="1.15" stroke-linejoin="round"/>
<polygon points="1247.6,780.7 1432.5,506.4 1434.5,511.0 1248.5,786.5 1247.6,786.2" fill="#a3a3a1" stroke="#0a0a0a" stroke-width="1.15" stroke-linejoin="round"/>
<polygon points="867.7,520.1 1112.6,528.8 1141.2,576.8 867.7,565.9" fill="#707070" stroke="#0a0a0a" stroke-width="1.15" stroke-linejoin="round"/>
<polygon points="867.7,565.9 1141.2,576.8 1125.2,596.5 848.0,585.1" fill="#8f8f8d" stroke="#0a0a0a" stroke-width="1.15" stroke-linejoin="round"/>
<polygon points="848.0,585.1 1125.2,596.5 1164.0,644.5 848.0,631.8" fill="#707070" stroke="#0a0a0a" stroke-width="1.15" stroke-linejoin="round"/>
<polygon points="848.0,631.8 1164.0,644.5 1148.0,665.1 827.5,652.4" fill="#8f8f8d" stroke="#0a0a0a" stroke-width="1.15" stroke-linejoin="round"/>
<polygon points="827.5,652.4 1148.0,665.1 1199.8,714.0 827.5,698.6" fill="#707070" stroke="#0a0a0a" stroke-width="1.15" stroke-linejoin="round"/>
<polygon points="827.5,698.6 1199.8,714.0 1184.6,736.6 806.2,720.2" fill="#8f8f8d" stroke="#0a0a0a" stroke-width="1.15" stroke-linejoin="round"/>
<polygon points="965.1,235.2 1056.5,238.0 806.0,464.2 698.8,460.3" fill="#737479" stroke="#0a0a0a" stroke-width="1.15" stroke-linejoin="round"/>
<polygon points="1056.5,238.0 1056.5,383.3 1008.2,382.8 867.7,520.1 867.7,565.9 848.0,585.1 848.0,631.8 827.5,652.4 827.5,698.6 806.2,720.2 806.0,464.2" fill="#515055" stroke="#0a0a0a" stroke-width="1.15" stroke-linejoin="round"/>
<polygon points="698.8,460.3 806.0,464.2 806.2,720.2 699.2,715.0" fill="#5f5f64" stroke="#0a0a0a" stroke-width="1.15" stroke-linejoin="round"/>
  </svg>
  <div class="abs" style="left:0;top:51px;width:1445px;height:1.8px;background:#131313"></div>
</div>
<div id="winborder" class="abs"></div>

<!-- left top panel -->
<div class="panel" style="left:8px;top:95px;width:43px;height:83px"></div>
<svg class="abs" style="left:17px;top:104px" width="25" height="26" viewBox="0 0 25 26">
  <polygon points="12.4,0.8 22.9,6.9 22.9,19.1 12.4,25.2 1.9,19.1 1.9,6.9" fill="#a3a3a3"/>
  <path d="M12.4 2.6 V7.6 M3.6 18 L7.6 15.8 M21.2 18 L17.2 15.8" stroke="#333" stroke-width="1.1"/>
  <polygon points="12.4,7 17.5,9.9 12.4,12.8 7.3,9.9" fill="#1a7df2"/>
  <polygon points="7.3,9.9 12.4,12.8 12.4,18.8 7.3,15.9" fill="#e8322c"/>
  <polygon points="17.5,9.9 12.4,12.8 12.4,18.8 17.5,15.9" fill="#2bb04a"/>
</svg>
<svg class="abs" style="left:17px;top:143px" width="25" height="22" viewBox="17 143 25 22">
  <polygon points="29.4,149.5 39.1,155.9 29.4,162.3 19.7,155.9" fill="#9c9c9c" stroke="#2f2f2f" stroke-width="1.1"/>
  <polygon points="29.4,145.3 39.1,151.7 29.4,158.1 19.7,151.7" fill="#9c9c9c" stroke="#2f2f2f" stroke-width="1.1"/>
  <polygon points="29.4,141.2 39.1,147.6 29.4,154 19.7,147.6" fill="#e0e0e0" stroke="#2f2f2f" stroke-width="1.1"/>
</svg>
<div class="divider" style="left:17.7px;top:186px;width:23.5px"></div>
<!-- search -->
<div class="panel" style="left:8px;top:408px;width:43px;height:43px"></div>
<svg class="abs" style="left:16px;top:416px" width="26" height="27" viewBox="0 0 26 27">
  <circle cx="11.3" cy="11.8" r="7.6" fill="none" stroke="#e4e4e4" stroke-width="1.6"/>
  <path d="M16.8 17.4 L23.5 24.2" stroke="#e4e4e4" stroke-width="1.7" stroke-linecap="round"/>
</svg>
<!-- tools panel -->
<div class="panel" style="left:8px;top:459.5px;width:43px;height:160.5px"></div>
<svg class="abs" style="left:14px;top:466px" width="30" height="30" viewBox="14 466 30 30">
  <g fill="#a8a8a8">
    <circle cx="19.5" cy="471.1" r="0.85"/><circle cx="26" cy="471.1" r="0.85"/><circle cx="32.4" cy="471.1" r="0.85"/>
    <circle cx="19.5" cy="477.6" r="0.85"/><circle cx="26" cy="477.6" r="0.85"/><circle cx="32.4" cy="477.6" r="0.85"/><circle cx="38.9" cy="477.6" r="0.85"/>
    <circle cx="26" cy="484.1" r="0.85"/><circle cx="38.9" cy="484.1" r="0.85"/>
    <circle cx="26" cy="490.6" r="0.85"/><circle cx="32.4" cy="490.6" r="0.85"/><circle cx="38.9" cy="490.6" r="0.85"/>
  </g>
  <path d="M19.5 490.6 C19.5 479 27 471.1 38.9 471.1" fill="none" stroke="#e6e6e6" stroke-width="1.5"/>
  <circle cx="19.5" cy="490.6" r="1.3" fill="#c8c8c8"/><circle cx="38.9" cy="471.1" r="1.3" fill="#c8c8c8"/>
  <path d="M28.6 484.1 H36.2 M32.4 480.3 V487.9" stroke="#f2f2f2" stroke-width="1.7"/>
</svg>
<svg class="abs" style="left:18px;top:509px" width="28" height="28" viewBox="18 509 28 28">
  <rect x="19.3" y="510" width="20.6" height="20.2" rx="2.8" fill="#a8a8a8"/>
  <path d="M24.5 520.1 H34.7 M29.6 515 V525.2" stroke="#2d2d2d" stroke-width="1.3"/>
  <polygon points="44.7,530.8 44.7,535.1 40.4,535.1" fill="#8f8f8f"/>
</svg>
<svg class="abs" style="left:16px;top:544px" width="30" height="33" viewBox="16 544 30 33">
  <polygon points="29.2,554.6 33.8,557.3 33.8,562.6 29.2,565.3 24.6,562.6 24.6,557.3" fill="#9a9a9a"/>
  <path d="M29.2 557.5 V547.9 M26.4 550.6 L29.2 547.7 L32 550.6" fill="none" stroke="#efefef" stroke-width="1.6" stroke-linecap="round" stroke-linejoin="round"/>
  <path d="M26.5 561.5 L19.5 565.6 M19.6 561.9 L19.4 565.6 L23.2 565.9" fill="none" stroke="#efefef" stroke-width="1.6" stroke-linecap="round" stroke-linejoin="round"/>
  <path d="M31.9 561.5 L39.4 565.6 M35.4 566 L39.4 565.6 L39.0 561.8" fill="none" stroke="#efefef" stroke-width="1.6" stroke-linecap="round" stroke-linejoin="round"/>
  <polygon points="44.8,570.4 44.8,575.2 40,575.2" fill="#8f8f8f"/>
</svg>
<svg class="abs" style="left:16px;top:585px" width="30" height="31" viewBox="16 585 30 31">
  <path d="M21.2 590.6 L28 597.4" stroke="#9a9a9a" stroke-width="2.2" stroke-linecap="round"/>
  <path d="M29.5 599 L36.8 606.3" stroke="#e8e8e8" stroke-width="2.4" stroke-linecap="round"/>
  <path d="M24.2 603.6 L33.2 594.6" stroke="#e8e8e8" stroke-width="2.4" stroke-linecap="round"/>
  <circle cx="22.4" cy="605.3" r="2.8" fill="none" stroke="#e8e8e8" stroke-width="1.7"/>
  <path d="M33 596 C32 592.5 34.6 590 38 591 L36 593.2 L37.3 594.5 L39.5 592.5 C40.5 595.8 38 598.4 34.6 597.5 Z" fill="#e8e8e8"/>
  <polygon points="44.8,610 44.8,614.3 40.4,614.3" fill="#8f8f8f"/>
</svg>
<!-- bottom -->
<div class="divider" style="left:18px;top:839.5px;width:23px"></div>
<div class="panel" style="left:8px;top:849.5px;width:43px;height:82.5px"></div>
<svg class="abs" style="left:19px;top:860px" width="21" height="23" viewBox="0 0 21 23">
  <defs><pattern id="hatch" width="3.6" height="3.6" patternUnits="userSpaceOnUse" patternTransform="rotate(-45)"><rect width="1.8" height="3.6" fill="#f0f0f0"/><rect x="1.8" width="1.8" height="3.6" fill="#2f2f2f"/></pattern></defs>
  <path d="M1.3 5 C1.3 1 19.7 1 19.7 5 V19.5 L15.5 21 L10.5 19.5 L5.5 21 L1.3 19.5 Z" fill="url(#hatch)"/>
  <ellipse cx="10.5" cy="5.2" rx="9.2" ry="3.6" fill="#b5b5b5"/>
  <path d="M7.8 6.5 H13.2 V19.8 L10.5 19 L7.8 19.8 Z" fill="#d8d8d8"/>
</svg>
<svg class="abs" style="left:17px;top:901px" width="26" height="19" viewBox="0 0 26 19">
  <ellipse cx="8.5" cy="6.5" rx="7.2" ry="4.8" fill="#a8a8a8"/>
  <path d="M1.3 6.5 V11.8 C1.3 14.6 4.5 16.2 8.5 16.2 H23.8 V11 H15.7 V6.5" fill="#a8a8a8"/>
  <ellipse cx="8.5" cy="6" rx="2.3" ry="1.4" fill="#2f2f2f"/>
  <rect x="7" y="11.8" width="16.8" height="4.4" fill="#e6e6e6"/>
  <path d="M10 14.2 V16.2 M13 14.7 V16.2 M16 14.2 V16.2 M19 14.7 V16.2 M22 14.2 V16.2" stroke="#777" stroke-width="0.8"/>
</svg>
<!-- right panel -->
<div class="panel" style="left:1394px;top:95.3px;width:43px;height:121.7px"></div>
<svg class="abs" style="left:1403px;top:103px" width="25" height="28" viewBox="0 0 25 28">
  <path d="M3.6 8.6 V17.2 A8.9 8.9 0 0 0 21.4 17.2 V8.6 H16.3 V17.2 A3.8 3.8 0 0 1 8.7 17.2 V8.6 Z" fill="#9c9c9c"/>
  <rect x="3.6" y="8.4" width="5.1" height="3" fill="#ececec"/><rect x="16.3" y="8.4" width="5.1" height="3" fill="#ececec"/>
  <polygon points="14.2,1.8 9.6,7.6 12.4,7.6 10.8,12.2 15.6,6.2 12.8,6.2" fill="#ececec"/>
</svg>
<div class="abs" style="left:1406.3px;top:146.6px;width:19px;text-align:center;font-family:'Liberation Mono',monospace;font-weight:bold;font-size:10px;line-height:11.2px;color:#e6e6e6">0.1<br>in</div>
<svg class="abs" style="left:1403px;top:182px" width="26" height="22" viewBox="0 0 26 22">
  <path d="M12.6 1.5 V6" stroke="#2a7de1" stroke-width="1.6"/>
  <path d="M8.4 15.4 L2.2 19.6" stroke="#e2342d" stroke-width="1.6"/>
  <path d="M16.8 15.4 L23.2 19.6" stroke="#36b34a" stroke-width="1.6"/>
  <polygon points="12.6,6.4 18,9.5 18,15.7 12.6,18.8 7.2,15.7 7.2,9.5" fill="none" stroke="#f2f2f2" stroke-width="1.5" stroke-linejoin="round"/>
  <path d="M7.2 9.5 L12.6 12.6 L18 9.5 M12.6 12.6 V18.8" fill="none" stroke="#f2f2f2" stroke-width="1.4"/>
</svg>
<div class="panel" style="left:1394px;top:225px;width:43px;height:42.7px"></div>
<svg class="abs" style="left:1403px;top:234px" width="25" height="25" viewBox="0 0 25 25">
  <circle cx="12.6" cy="12.4" r="10.2" fill="none" stroke="#d6d6d6" stroke-width="1.3"/>
  <path d="M12.6 6.6 V13 H7.6" fill="none" stroke="#d6d6d6" stroke-width="1.3"/>
</svg>
<div class="divider" style="left:1404px;top:276.5px;width:23px"></div>
<!-- view cube -->
<svg class="abs" style="left:1285px;top:110px" width="80" height="65" viewBox="1285 110 80 65">
  <polygon points="1306.5,123.2 1343.5,125.2 1347.2,128 1347.2,162.5 1341.6,166.5 1304.4,164.8 1304.4,128.2" fill="#454545"/>
  <polygon points="1306.8,123.1 1343.3,125.1 1346.5,127.5 1341.6,128 1304.6,127.8" fill="#4e4e4e"/>
  <rect x="1304.4" y="128" width="37.2" height="38.5" fill="#4a4a4a"/>
  <rect x="1306.7" y="132.8" width="32.6" height="31.6" fill="#363636"/>
  <polygon points="1341.6,128 1347.2,126.5 1347.2,162.5 1341.6,166.5" fill="#3d3d3d"/>
  <text x="1322.5" y="151.3" text-anchor="middle" font-family="Liberation Mono" font-weight="bold" font-size="9" fill="#e8e8e8">Left</text>
  <path d="M1341.7 127.3 V168.2" stroke="#2a72c8" stroke-width="1.2"/>
  <path d="M1301 166.7 L1341.7 168.4" stroke="#2ea040" stroke-width="1.3"/>
  <path d="M1341.7 168.4 L1347.2 162.6" stroke="#c8362e" stroke-width="1.2"/>
  <text x="1341.8" y="123.6" text-anchor="middle" font-family="Liberation Sans" font-size="7" fill="#2a72c8">Z</text>
  <text x="1294.5" y="169.6" text-anchor="middle" font-family="Liberation Sans" font-size="7" fill="#2ea040">Y</text>
  <text x="1350.2" y="162" text-anchor="middle" font-family="Liberation Sans" font-size="7" fill="#c8362e">X</text>
</svg>
<!-- minimap -->
<div class="abs" style="left:1281.3px;top:826.3px;width:151.6px;height:101.7px;background:#050505;border-radius:4px"></div>
<svg class="abs" style="left:1280px;top:825px" width="155" height="105" viewBox="0 0 1388 940">
  <defs><linearGradient id="mmbar" x1="0" x2="1"><stop offset="0" stop-color="#3e2f2a"/><stop offset="0.45" stop-color="#9a3b14"/><stop offset="1" stop-color="#3d1d29"/></linearGradient></defs>
  <rect x="42" y="42" width="1298" height="846" fill="#1c1c1c" stroke="#b8b8b8" stroke-width="14"/>
  <rect x="50" y="48" width="1282" height="34" fill="url(#mmbar)"/>
  <rect x="50" y="82" width="1282" height="44" fill="#3b3633"/>
  <g fill="#f0f0f0" opacity="0.55"><rect x="90" y="58" width="360" height="12"/><rect x="1060" y="58" width="260" height="12"/><rect x="195" y="96" width="100" height="12"/></g>
  <circle cx="68" cy="102" r="6" fill="#fe5f57"/><circle cx="86" cy="102" r="6" fill="#febc2e"/><circle cx="104" cy="102" r="6" fill="#28c840"/>
  <!-- left object -->
  <polygon points="55,126 265,126 265,222 55,300" fill="#56565b"/>
  <polygon points="55,126 215,126 55,215" fill="#75757a"/>
  <polygon points="55,300 200,228 395,236 225,345 55,345" fill="#8e8e8c"/>
  <polygon points="225,345 395,236 420,262 470,282 540,340 245,550 215,540" fill="#6f6f75"/>
  <polygon points="55,345 225,345 215,380 230,395 215,430 228,450 215,490 230,505 215,530 245,550 55,550" fill="#7a7a78"/>
  <g fill="#8e8e8c"><polygon points="55,375 205,378 215,392 55,392"/><polygon points="55,425 200,428 212,440 55,440"/><polygon points="55,485 200,488 212,500 55,500"/></g>
  <!-- main object -->
  <polygon points="480,555 700,345 850,245 1290,262 1325,292 1325,592" fill="#8f8f8d"/>
  <g fill="#70706e"><polygon points="700,345 845,350 845,395 650,392"/><polygon points="620,420 845,425 845,465 585,458"/><polygon points="560,490 845,495 845,515 530,512"/><polygon points="480,555 1325,592 1325,570 1290,540 500,530"/></g>
  <g fill="#70706e"><polygon points="1000,345 1215,365 1235,410 1000,400"/><polygon points="990,430 1240,440 1262,470 980,465"/><polygon points="975,492 1265,500 1290,535 965,525"/></g>
  <polygon points="1000,345 1100,255 1290,262 1215,365" fill="#8f8f8d"/>
  <polygon points="1215,365 1290,262 1325,292 1325,592 1290,540 1262,470 1240,440 1235,410" fill="#9a9a98"/>
  <polygon points="855,295 1050,126 1135,126 940,305" fill="#737479"/>
  <polygon points="940,305 1135,130 1135,245 1100,255 1000,345 1000,400 990,430 980,465 965,525 940,535" fill="#515055"/>
  <polygon points="845,300 940,305 940,535 845,530" fill="#5f5f64"/>
  <!-- ui bits -->
  <g fill="#2f2f2f"><rect x="58" y="135" width="26" height="70" rx="6"/><rect x="58" y="410" width="26" height="180" rx="6"/><rect x="58" y="800" width="26" height="70" rx="6"/><rect x="1295" y="135" width="26" height="150" rx="6"/></g>
  <g fill="#bbbbbb" opacity="0.7"><rect x="64" y="145" width="12" height="12"/><rect x="64" y="175" width="12" height="12"/><rect x="64" y="425" width="12" height="12"/><rect x="64" y="500" width="12" height="12"/><rect x="64" y="815" width="12" height="12"/><rect x="64" y="845" width="12" height="12"/><rect x="1302" y="145" width="12" height="12"/><rect x="1302" y="215" width="12" height="12"/></g>
  <rect x="1210" y="160" width="40" height="40" fill="#3a3a3a"/>
  <rect x="1190" y="790" width="130" height="75" fill="#222" stroke="#9a3b14" stroke-width="4"/>
  <polygon points="1195,835 1240,805 1310,810 1310,850 1200,860" fill="#8a8a88"/>
</svg>

</body></html>
